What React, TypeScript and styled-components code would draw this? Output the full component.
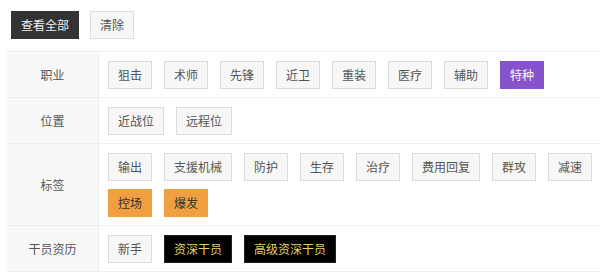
import React from "react";
import styled, { createGlobalStyle, css } from "styled-components";

const Global = createGlobalStyle`
  html, body { margin: 0; padding: 0; background: #fff; }
  body { font-family: "Noto Sans CJK SC", "Noto Sans", sans-serif; font-size: 12px; color: #555; }
  * { box-sizing: border-box; }
`;

type Variant = "default" | "dark" | "purple" | "orange" | "black";

const variants: Record<Variant, ReturnType<typeof css>> = {
  default: css`background: #f7f7f7; border-color: #dcdcdc; color: #555;`,
  dark: css`background: #333; border-color: #333; color: #f0f0f0;`,
  purple: css`background: #8852cc; border-color: #8852cc; color: #fff;`,
  orange: css`background: #f0a040; border-color: #f0a040; color: #333;`,
  black: css`background: #000; border-color: #222; color: #e3d06a;`,
};

const Page = styled.div`
  padding-top: 11px;
`;

const TopBar = styled.div`
  display: flex;
  gap: 11px;
  padding-left: 11px;
  margin-bottom: 12px;
`;

const Tag = styled.button<{ $v?: Variant }>`
  height: 28px;
  padding: 0 9px;
  border: 1px solid;
  border-radius: 0;
  font-family: inherit;
  font-size: 12px;
  line-height: 26px;
  cursor: pointer;
  white-space: nowrap;
  ${(p) => variants[p.$v ?? "default"]}
`;

const Table = styled.div`
  margin-left: 7px;
  border-top: 1px solid #efefef;
`;

const Row = styled.div`
  display: grid;
  grid-template-columns: 92px 1fr;
  border-bottom: 1px solid #efefef;
`;

const Label = styled.div`
  background: #f8f8f8;
  border-right: 1px solid #efefef;
  display: flex;
  align-items: center;
  justify-content: center;
  color: #555;
  font-size: 12px;
`;

const Cell = styled.div`
  display: flex;
  flex-wrap: wrap;
  gap: 8px 12px;
  padding: 9px 0 8px 9px;
`;

type Item = { t: string; v?: Variant };
const rows: { label: string; items: Item[] }[] = [
  {
    label: "职业",
    items: [
      { t: "狙击" }, { t: "术师" }, { t: "先锋" }, { t: "近卫" },
      { t: "重装" }, { t: "医疗" }, { t: "辅助" }, { t: "特种", v: "purple" },
    ],
  },
  { label: "位置", items: [{ t: "近战位" }, { t: "远程位" }] },
  {
    label: "标签",
    items: [
      { t: "输出" }, { t: "支援机械" }, { t: "防护" }, { t: "生存" },
      { t: "治疗" }, { t: "费用回复" }, { t: "群攻" }, { t: "减速" },
      { t: "控场", v: "orange" }, { t: "爆发", v: "orange" },
    ],
  },
  {
    label: "干员资历",
    items: [{ t: "新手" }, { t: "资深干员", v: "black" }, { t: "高级资深干员", v: "black" }],
  },
];

export default function App() {
  return (
    <Page>
      <Global />
      <TopBar>
        <Tag $v="dark">查看全部</Tag>
        <Tag>清除</Tag>
      </TopBar>
      <Table>
        {rows.map((r) => (
          <Row key={r.label}>
            <Label>{r.label}</Label>
            <Cell>
              {r.items.map((i) => (
                <Tag key={i.t} $v={i.v}>{i.t}</Tag>
              ))}
            </Cell>
          </Row>
        ))}
      </Table>
    </Page>
  );
}
